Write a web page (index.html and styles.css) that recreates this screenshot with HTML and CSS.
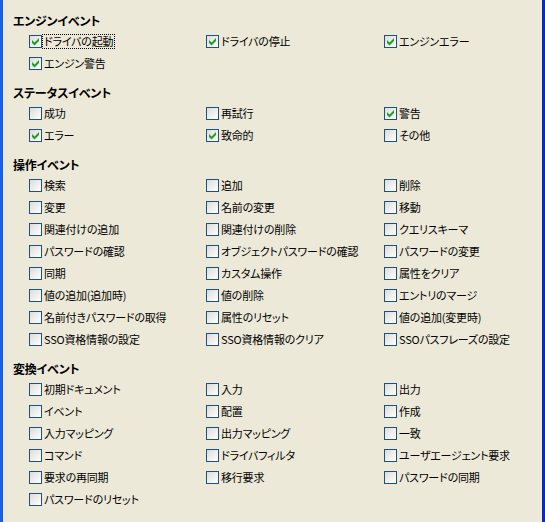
FILE: index.html
```html
<!DOCTYPE html>
<html lang="ja">
<head>
    <meta charset="UTF-8">
    <title>イベント設定</title>
    <link rel="stylesheet" href="styles.css">
</head>
<body>
    <div class="window">

        <!-- エンジンイベント -->
        <div class="section">
            <h2>エンジンイベント</h2>
            <div class="options">
                <label class="option focused"><input type="checkbox" checked><span>ドライバの起動</span></label>
                <label class="option"><input type="checkbox" checked><span>ドライバの停止</span></label>
                <label class="option"><input type="checkbox" checked><span>エンジンエラー</span></label>
                <label class="option"><input type="checkbox" checked><span>エンジン警告</span></label>
            </div>
        </div>

        <!-- ステータスイベント -->
        <div class="section">
            <h2>ステータスイベント</h2>
            <div class="options">
                <label class="option"><input type="checkbox"><span>成功</span></label>
                <label class="option"><input type="checkbox"><span>再試行</span></label>
                <label class="option"><input type="checkbox" checked><span>警告</span></label>
                <label class="option"><input type="checkbox" checked><span>エラー</span></label>
                <label class="option"><input type="checkbox" checked><span>致命的</span></label>
                <label class="option"><input type="checkbox"><span>その他</span></label>
            </div>
        </div>

        <!-- 操作イベント -->
        <div class="section">
            <h2>操作イベント</h2>
            <div class="options">
                <label class="option"><input type="checkbox"><span>検索</span></label>
                <label class="option"><input type="checkbox"><span>追加</span></label>
                <label class="option"><input type="checkbox"><span>削除</span></label>
                <label class="option"><input type="checkbox"><span>変更</span></label>
                <label class="option"><input type="checkbox"><span>名前の変更</span></label>
                <label class="option"><input type="checkbox"><span>移動</span></label>
                <label class="option"><input type="checkbox"><span>関連付けの追加</span></label>
                <label class="option"><input type="checkbox"><span>関連付けの削除</span></label>
                <label class="option"><input type="checkbox"><span>クエリスキーマ</span></label>
                <label class="option"><input type="checkbox"><span>パスワードの確認</span></label>
                <label class="option"><input type="checkbox"><span>オブジェクトパスワードの確認</span></label>
                <label class="option"><input type="checkbox"><span>パスワードの変更</span></label>
                <label class="option"><input type="checkbox"><span>同期</span></label>
                <label class="option"><input type="checkbox"><span>カスタム操作</span></label>
                <label class="option"><input type="checkbox"><span>属性をクリア</span></label>
                <label class="option"><input type="checkbox"><span>値の追加(追加時)</span></label>
                <label class="option"><input type="checkbox"><span>値の削除</span></label>
                <label class="option"><input type="checkbox"><span>エントリのマージ</span></label>
                <label class="option"><input type="checkbox"><span>名前付きパスワードの取得</span></label>
                <label class="option"><input type="checkbox"><span>属性のリセット</span></label>
                <label class="option"><input type="checkbox"><span>値の追加(変更時)</span></label>
                <label class="option"><input type="checkbox"><span>SSO資格情報の設定</span></label>
                <label class="option"><input type="checkbox"><span>SSO資格情報のクリア</span></label>
                <label class="option"><input type="checkbox"><span>SSOパスフレーズの設定</span></label>
            </div>
        </div>

        <!-- 変換イベント -->
        <div class="section">
            <h2>変換イベント</h2>
            <div class="options">
                <label class="option"><input type="checkbox"><span>初期ドキュメント</span></label>
                <label class="option"><input type="checkbox"><span>入力</span></label>
                <label class="option"><input type="checkbox"><span>出力</span></label>
                <label class="option"><input type="checkbox"><span>イベント</span></label>
                <label class="option"><input type="checkbox"><span>配置</span></label>
                <label class="option"><input type="checkbox"><span>作成</span></label>
                <label class="option"><input type="checkbox"><span>入力マッピング</span></label>
                <label class="option"><input type="checkbox"><span>出力マッピング</span></label>
                <label class="option"><input type="checkbox"><span>一致</span></label>
                <label class="option"><input type="checkbox"><span>コマンド</span></label>
                <label class="option"><input type="checkbox"><span>ドライバフィルタ</span></label>
                <label class="option"><input type="checkbox"><span>ユーザエージェント要求</span></label>
                <label class="option"><input type="checkbox"><span>要求の再同期</span></label>
                <label class="option"><input type="checkbox"><span>移行要求</span></label>
                <label class="option"><input type="checkbox"><span>パスワードの同期</span></label>
                <label class="option"><input type="checkbox"><span>パスワードのリセット</span></label>
            </div>
        </div>

    </div>
</body>
</html>
```

FILE: styles.css
```css
* {
    box-sizing: border-box;
    margin: 0;
    padding: 0;
}

body {
    width: 545px;
    height: 522px;
    overflow: hidden;
    font-family: "Noto Sans CJK JP", "Noto Sans", sans-serif;
    font-size: 11px;
    font-feature-settings: "palt";
    color: #000;
    background-color: #ece9d8;
}

.window {
    height: 522px;
    padding: 12px 0 0 10px;
    border-left: 3px solid #1a5fe8;
    border-right: 3px solid #0a27c4;
    background-color: #ece9d8;
}

.section {
    margin-bottom: 10px;
}

h2 {
    height: 18px;
    line-height: 18px;
    font-size: 12px;
    font-weight: bold;
    letter-spacing: -0.2px;
}

.options {
    display: grid;
    grid-template-columns: 177px 178px 1fr;
    padding-left: 16px;
}

.option {
    display: flex;
    align-items: center;
    height: 22px;
    white-space: nowrap;
    letter-spacing: -0.2px;
}

.option span {
    padding: 0 1px;
    line-height: 13px;
    border: 1px solid transparent;
}

.option.focused span {
    border: 1px dotted #000;
}

input[type="checkbox"] {
    appearance: none;
    -webkit-appearance: none;
    flex: none;
    width: 13px;
    height: 13px;
    border: 1px solid #1c5180;
    background: linear-gradient(135deg, #dcdcd7, #ffffff);
}

input[type="checkbox"]:checked {
    background-image: url("data:image/svg+xml,%3Csvg xmlns='http://www.w3.org/2000/svg' width='11' height='11'%3E%3Cpath d='M2 4L4.5 6.5L9 2V5L4.5 9.5L2 7Z' fill='%2321a121'/%3E%3C/svg%3E"), linear-gradient(135deg, #dcdcd7, #ffffff);
}
```
